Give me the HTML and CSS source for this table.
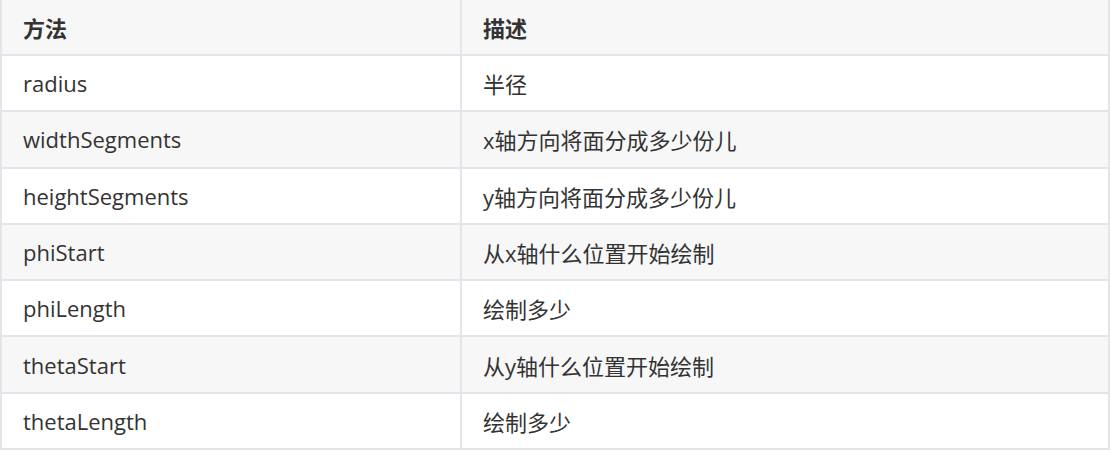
FILE: index.html
```html
<!DOCTYPE html>
<html lang="zh-CN">
<head>
<meta charset="utf-8">
<title>方法</title>
<link rel="stylesheet" href="styles.css">
</head>
<body>
<table class="api-table">
  <thead>
    <tr><th class="col-method">方法</th><th>描述</th></tr>
  </thead>
  <tbody>
    <tr><td>radius</td><td>半径</td></tr>
    <tr><td>widthSegments</td><td>x轴方向将面分成多少份儿</td></tr>
    <tr><td>heightSegments</td><td>y轴方向将面分成多少份儿</td></tr>
    <tr><td>phiStart</td><td>从x轴什么位置开始绘制</td></tr>
    <tr><td>phiLength</td><td>绘制多少</td></tr>
    <tr><td>thetaStart</td><td>从y轴什么位置开始绘制</td></tr>
    <tr><td>thetaLength</td><td>绘制多少</td></tr>
  </tbody>
</table>
</body>
</html>
```
FILE: styles.css
```css
html, body {
  margin: 0;
  padding: 0;
  background: #ffffff;
}

.api-table {
  border-collapse: collapse;
  width: 1110px;
  font-family: "Open Sans", "Noto Sans CJK SC", sans-serif;
  font-size: 22px;
  color: #333333;
  table-layout: fixed;
}

.api-table th,
.api-table td {
  border: 2px solid #e2e5e9;
  padding: 0 21px;
  text-align: left;
  vertical-align: middle;
  white-space: nowrap;
}

.api-table th {
  border-top: 0;
  height: 54px;
  font-weight: 700;
  background: #f7f7f7;
}

.api-table td {
  height: 54.3px;
}

.api-table .col-method {
  width: 416px;
}

.api-table tbody tr:nth-child(even) td {
  background: #f7f7f7;
}
```
